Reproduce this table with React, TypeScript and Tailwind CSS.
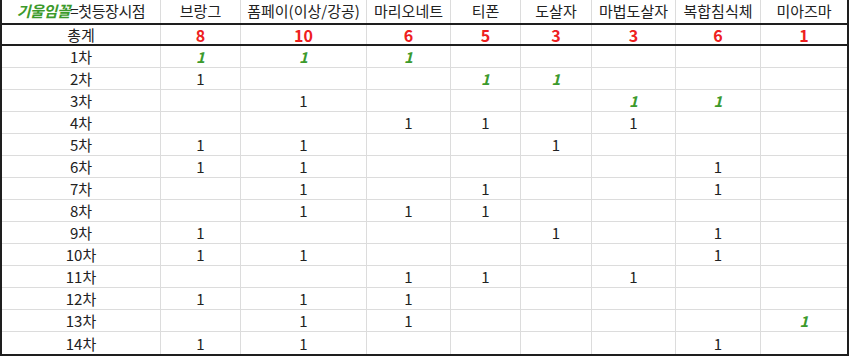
import React from "react";

const cols = ["브랑그", "폼페이(이상/강공)", "마리오네트", "티폰", "도살자", "마법도살자", "복합침식체", "미아즈마"];
const totals = [8, 10, 6, 5, 3, 3, 6, 1];

// 0 = empty, 1 = normal, 2 = green italic (first appearance)
const data: number[][] = [
  [2, 2, 2, 0, 0, 0, 0, 0],
  [1, 0, 0, 2, 2, 0, 0, 0],
  [0, 1, 0, 0, 0, 2, 2, 0],
  [0, 0, 1, 1, 0, 1, 0, 0],
  [1, 1, 0, 0, 1, 0, 0, 0],
  [1, 1, 0, 0, 0, 0, 1, 0],
  [0, 1, 0, 1, 0, 0, 1, 0],
  [0, 1, 1, 1, 0, 0, 0, 0],
  [1, 0, 0, 0, 1, 0, 1, 0],
  [1, 1, 0, 0, 0, 0, 1, 0],
  [0, 0, 1, 1, 0, 1, 0, 0],
  [1, 1, 1, 0, 0, 0, 0, 0],
  [0, 1, 1, 0, 0, 0, 0, 2],
  [1, 1, 0, 0, 0, 0, 1, 0],
];

const gridCols = "grid grid-cols-[159px_80px_126px_84px_70px_71px_84px_85px_86px]";

function cellBorder(i: number) {
  return i < 8 ? "border-r border-[#dcdcdc]" : "";
}

export default function App() {
  return (
    <div className="w-[850px] h-[356px] bg-white" style={{ fontFamily: '"Noto Sans CJK KR", "Noto Sans", sans-serif' }}>
      <div className="w-[849px] border-l-2 border-r-2 border-b-2 border-[#1e1e1e] text-[#222] text-[15px] leading-none">
        {/* Header */}
        <div className={`${gridCols} h-[25px] border-b-2 border-[#1e1e1e]`}>
          <div className={`${cellBorder(0)} flex items-center justify-center pb-[2px] tracking-[-0.4px]`}>
            <span className="italic font-bold text-[#3c9a2c]">기울임꼴</span>
            <span>=첫등장시점</span>
          </div>
          {cols.map((c, i) => (
            <div key={c} className={`${cellBorder(i + 1)} flex items-center justify-center pb-[2px] whitespace-nowrap`}>
              {c}
            </div>
          ))}
        </div>
        {/* Totals */}
        <div className={`${gridCols} h-[21px] border-b-2 border-[#1e1e1e]`}>
          <div className={`${cellBorder(0)} flex items-center justify-center`}>총계</div>
          {totals.map((t, i) => (
            <div key={i} className={`${cellBorder(i + 1)} flex items-center justify-center font-bold text-[16px] text-[#ee2020]`}>
              {t}
            </div>
          ))}
        </div>
        {/* Data rows */}
        {data.map((row, r) => (
          <div key={r} className={`${gridCols} h-[22px] ${r < data.length - 1 ? "border-b border-[#dcdcdc]" : ""}`}>
            <div className={`${cellBorder(0)} flex items-center justify-center`}>{r + 1}차</div>
            {row.map((v, i) => (
              <div key={i} className={`${cellBorder(i + 1)} flex items-center justify-center`}>
                {v === 1 && <span>1</span>}
                {v === 2 && <span className="italic font-bold text-[#3c9a2c]">1</span>}
              </div>
            ))}
          </div>
        ))}
      </div>
    </div>
  );
}
